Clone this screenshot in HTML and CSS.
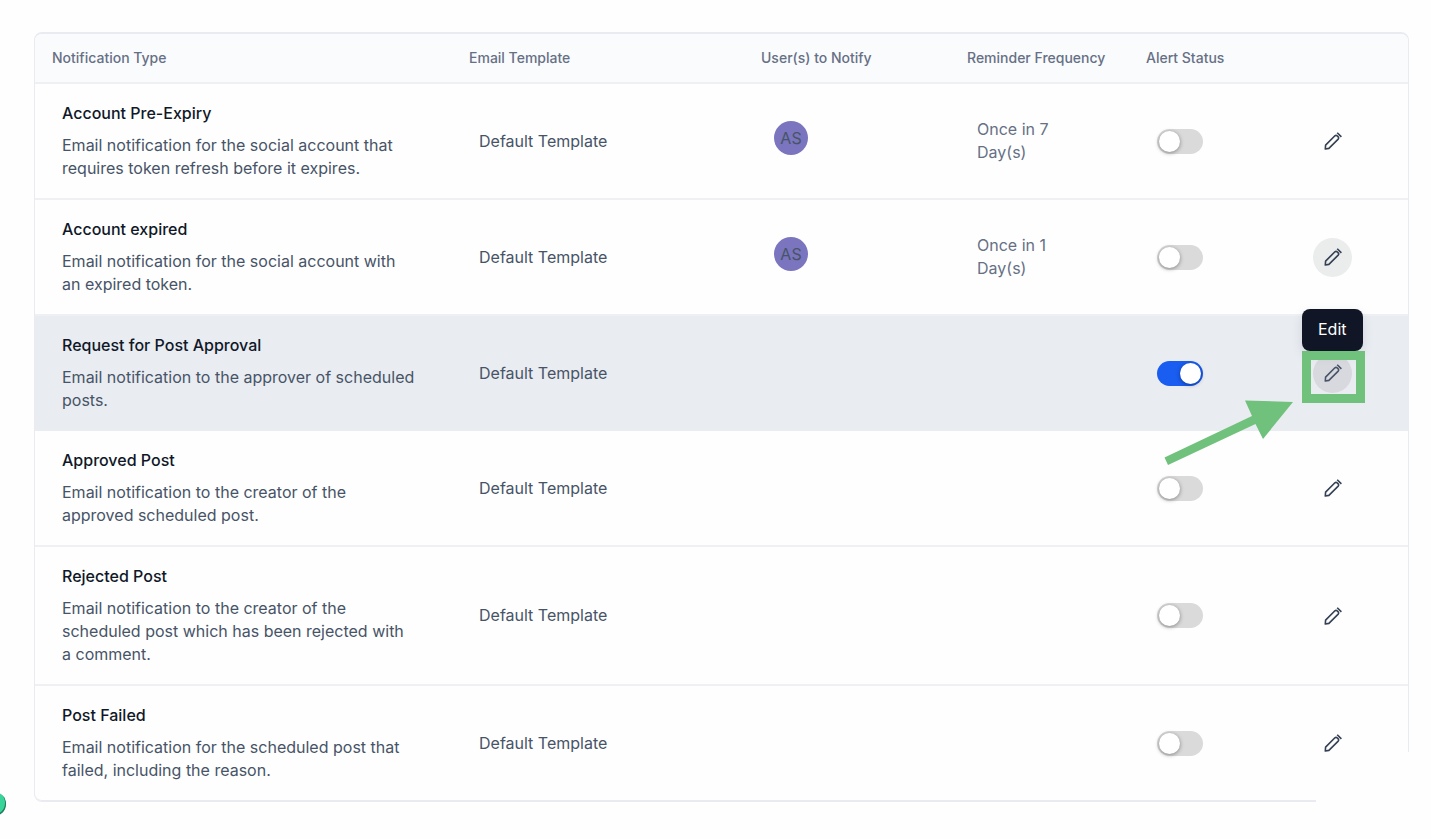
FILE: index.html
```html
<!DOCTYPE html>
<html lang="en">
<head>
<meta charset="utf-8">
<meta name="viewport" content="width=device-width, initial-scale=1">
<title>Notifications</title>
<link rel="stylesheet" href="styles.css">
</head>
<body>
<svg class="sprite" aria-hidden="true">
  <symbol id="pencil" viewBox="0 0 20 20">
    <path d="M2.300 18 2.600 14.100 11.900 4.800 Q13 3.800 14.100 4.800 L15.200 5.900 Q16.200 7 15.200 8.100 L5.900 17.400 Z"/>
    <path d="M14.200 1.700 18.400 5.900"/>
  </symbol>
</svg>
<main class="page">
  <table class="notifications">
    <colgroup>
      <col class="col-type"><col class="col-template"><col class="col-users"><col class="col-frequency"><col class="col-status"><col class="col-actions">
    </colgroup>
    <thead>
      <tr>
        <th scope="col">Notification Type</th>
        <th scope="col">Email Template</th>
        <th scope="col">User(s) to Notify</th>
        <th scope="col">Reminder Frequency</th>
        <th scope="col">Alert Status</th>
        <td></td>
      </tr>
    </thead>
    <tbody>
      <tr>
        <td class="details"><h2 class="title" id="n1">Account Pre-Expiry</h2><p class="description">Email notification for the social account that requires token refresh before it expires.</p></td>
        <td>Default Template</td>
        <td><span class="avatar">AS</span></td>
        <td class="frequency">Once in 7<br>Day(s)</td>
        <td class="control"><input class="toggle" type="checkbox" role="switch" aria-labelledby="n1"></td>
        <td class="control"><div class="action"><button class="edit" type="button" aria-label="Edit"><svg class="icon"><use href="#pencil"/></svg></button></div></td>
      </tr>
      <tr>
        <td class="details"><h2 class="title" id="n2">Account expired</h2><p class="description">Email notification for the social account with an expired token.</p></td>
        <td>Default Template</td>
        <td><span class="avatar">AS</span></td>
        <td class="frequency">Once in 1<br>Day(s)</td>
        <td class="control"><input class="toggle" type="checkbox" role="switch" aria-labelledby="n2"></td>
        <td class="control"><div class="action"><button class="edit edit-focus" type="button" aria-label="Edit"><svg class="icon"><use href="#pencil"/></svg></button></div></td>
      </tr>
      <tr class="selected">
        <td class="details"><h2 class="title" id="n3">Request for Post Approval</h2><p class="description">Email notification to the approver of scheduled posts.</p></td>
        <td>Default Template</td>
        <td></td>
        <td></td>
        <td class="control"><input class="toggle" type="checkbox" role="switch" aria-labelledby="n3" checked></td>
        <td class="control"><div class="action"><button class="edit edit-hover" type="button" aria-labelledby="tip"><svg class="icon"><use href="#pencil"/></svg></button>
          <span class="tooltip" role="tooltip" id="tip">Edit</span>
          <span class="marker"></span>
          <svg class="arrow" viewBox="0 0 130 66" aria-hidden="true"><path d="M0.5 57.500 88 16 81 0.500 129 2 99 39 91.500 24 4 65Z"/></svg>
        </div></td>
      </tr>
      <tr>
        <td class="details"><h2 class="title" id="n4">Approved Post</h2><p class="description">Email notification to the creator of the approved scheduled post.</p></td>
        <td>Default Template</td>
        <td></td>
        <td></td>
        <td class="control"><input class="toggle" type="checkbox" role="switch" aria-labelledby="n4"></td>
        <td class="control"><div class="action"><button class="edit" type="button" aria-label="Edit"><svg class="icon"><use href="#pencil"/></svg></button></div></td>
      </tr>
      <tr>
        <td class="details"><h2 class="title" id="n5">Rejected Post</h2><p class="description">Email notification to the creator of the scheduled post which has been rejected with a comment.</p></td>
        <td>Default Template</td>
        <td></td>
        <td></td>
        <td class="control"><input class="toggle" type="checkbox" role="switch" aria-labelledby="n5"></td>
        <td class="control"><div class="action"><button class="edit" type="button" aria-label="Edit"><svg class="icon"><use href="#pencil"/></svg></button></div></td>
      </tr>
      <tr>
        <td class="details"><h2 class="title" id="n6">Post Failed</h2><p class="description">Email notification for the scheduled post that failed, including the reason.</p></td>
        <td>Default Template</td>
        <td></td>
        <td></td>
        <td class="control"><input class="toggle" type="checkbox" role="switch" aria-labelledby="n6"></td>
        <td class="control"><div class="action"><button class="edit" type="button" aria-label="Edit"><svg class="icon"><use href="#pencil"/></svg></button></div></td>
      </tr>
    </tbody>
  </table>
</main>
<div class="corner-cover"></div>
<div class="side-dot"></div>
</body>
</html>
```
FILE: styles.css
```css
* { box-sizing: border-box; }

body {
  margin: 0;
  background: #fefefe;
  color: #475467;
  font: 16px/23px Inter, "Liberation Sans", sans-serif;
  overflow: hidden;
}

.sprite { position: absolute; width: 0; height: 0; }

.page { padding: 32px 22px 32px 34px; }

.notifications {
  width: 100%;
  table-layout: fixed;
  border-collapse: separate;
  border-spacing: 0;
  border: 1px solid #e9ebf1;
  border-top-width: 2px;
  border-radius: 8px;
}

.col-type { width: 417px; }
.col-template { width: 292px; }
.col-users { width: 206px; }
.col-frequency { width: 179px; }
.col-status { width: 156px; }

th, thead td {
  height: 50px;
  padding: 0 17px 2px;
  border-bottom: 2px solid #eef0f4;
  background: #fafbfd;
  color: #667085;
  font-size: 14px;
  font-weight: 500;
  text-align: left;
  white-space: nowrap;
}

th:first-child { border-top-left-radius: 7px; }
thead td:last-child { border-top-right-radius: 7px; }

tbody td {
  padding: 18px 27px;
  border-bottom: 2px solid #eef0f4;
  vertical-align: middle;
}

tbody .details { padding-right: 37px; }
tbody .control { padding-left: 28px; }

tbody tr:last-child td { border-bottom-color: #e9ebf1; border-bottom-width: 1px; }
tbody tr:last-child td:first-child { border-bottom-left-radius: 7px; }

tbody .selected td { background: #e9ecf1; border-bottom: 1px solid #e9ecf1; }

.title {
  margin: 0 0 9px;
  color: #101828;
  font-size: 16px;
  font-weight: 500;
  line-height: 23px;
}

.description { margin: 0; }

.frequency { color: #667085; }

.avatar {
  display: flex;
  align-items: center;
  justify-content: center;
  width: 34px;
  height: 34px;
  margin: 0 0 6px 3px;
  border-radius: 50%;
  background: #7a75be;
}

.toggle {
  display: block;
  appearance: none;
  width: 46px;
  height: 25px;
  margin: 0;
  padding: 2px;
  border-radius: 13px;
  background: #dadada;
}

.toggle::before {
  content: "";
  display: block;
  width: 21px;
  height: 21px;
  border-radius: 50%;
  background: #fff;
  box-shadow: 0 1px 4px rgba(0, 0, 0, .4);
}

.toggle:checked { background: #195df1; }
.toggle:checked::before { margin-left: auto; }

.action { position: relative; width: 39px; height: 39px; }

.edit {
  display: flex;
  align-items: center;
  justify-content: center;
  width: 39px;
  height: 39px;
  padding: 0;
  border: 0;
  border-radius: 50%;
  background: transparent;
  color: #344054;
}

.edit-focus { background: #ebedec; }
.edit-hover { background: #d8d9de; color: #475467; }

.icon {
  width: 20px;
  height: 20px;
  fill: none;
  stroke: currentColor;
  stroke-width: 1.6;
  stroke-linejoin: round;
}

.tooltip {
  position: absolute;
  left: -11px;
  bottom: 42px;
  z-index: 1;
  padding: 9px 16px 10px;
  border-radius: 8px;
  background: #101626;
  box-shadow: 0 4px 12px rgba(16, 24, 40, .1);
  color: #fff;
}

.marker {
  position: absolute;
  left: -11px;
  top: -3px;
  z-index: 2;
  width: 63px;
  height: 52px;
  border: 9px solid #70c17c;
}

.arrow {
  position: absolute;
  left: -149px;
  top: 46px;
  z-index: 2;
  width: 130px;
  height: 66px;
  fill: #70c17c;
}

.corner-cover {
  position: fixed;
  right: 0;
  bottom: 0;
  width: 115px;
  height: 87px;
  background: #fefefe;
}

.side-dot {
  position: fixed;
  left: -18px;
  bottom: 23px;
  width: 24px;
  height: 24px;
  border-radius: 50%;
  background: #38d49a;
  box-shadow: inset -1px -1px 0 #28785c;
}
```
